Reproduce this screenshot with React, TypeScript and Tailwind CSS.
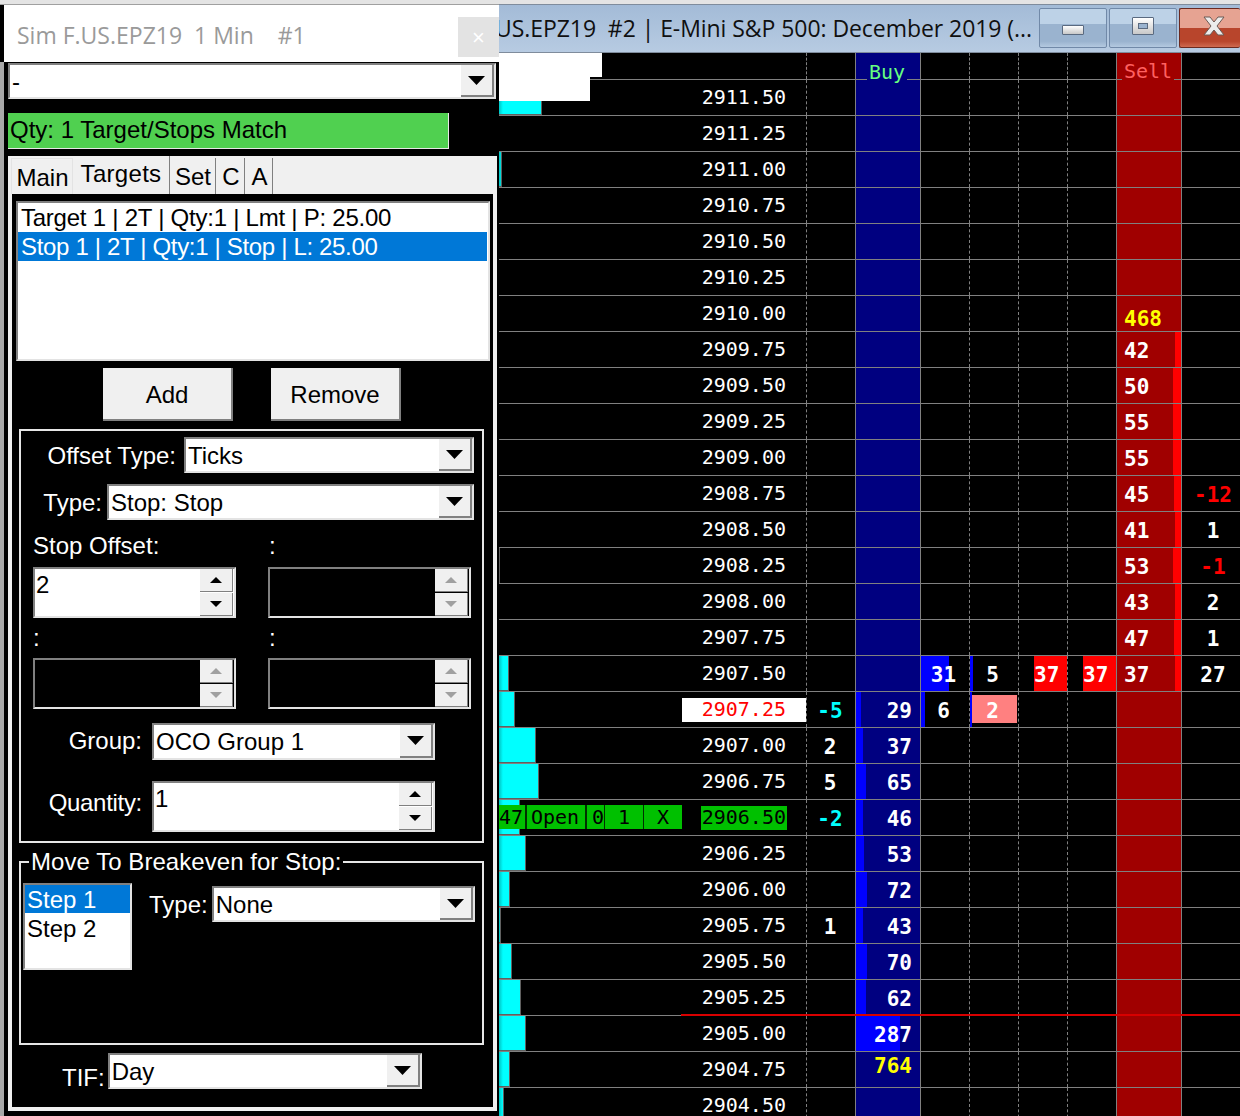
import type { ReactNode } from 'react';

const SANS = 'font-["Liberation_Sans",Arial,sans-serif]';
const GRID = 'grid grid-cols-[307px_49px_65px_49px_49px_49px_49px_65px_59px]';

type Row = {
  price: string;
  bar?: number;
  priceStyle?: 'last' | 'order';
  delta?: string;
  deltaCyan?: boolean;
  buy?: string;
  buyBar?: number;
  buyYellow?: boolean;
  sell?: string;
  sellBar?: number;
  sellYellow?: boolean;
  right?: string;
  rightRed?: boolean;
  kind?: 'trades' | 'trades2' | 'order' | 'line';
};

const rows: Row[] = [
  { price: '2911.50', bar: 43 },
  { price: '2911.25' },
  { price: '2911.00', bar: 3 },
  { price: '2910.75' },
  { price: '2910.50' },
  { price: '2910.25' },
  { price: '2910.00', sell: '468', sellYellow: true },
  { price: '2909.75', sell: '42', sellBar: 6 },
  { price: '2909.50', sell: '50', sellBar: 8 },
  { price: '2909.25', sell: '55', sellBar: 8 },
  { price: '2909.00', sell: '55', sellBar: 8 },
  { price: '2908.75', sell: '45', sellBar: 7, right: '-12', rightRed: true },
  { price: '2908.50', sell: '41', sellBar: 6, right: '1' },
  { price: '2908.25', bar: 1, sell: '53', sellBar: 8, right: '-1', rightRed: true },
  { price: '2908.00', sell: '43', sellBar: 6, right: '2' },
  { price: '2907.75', sell: '47', sellBar: 7, right: '1' },
  { price: '2907.50', bar: 10, sell: '37', sellBar: 6, right: '27', kind: 'trades' },
  { price: '2907.25', bar: 16, priceStyle: 'last', delta: '-5', deltaCyan: true, buy: '29', buyBar: 5, kind: 'trades2' },
  { price: '2907.00', bar: 37, delta: '2', buy: '37', buyBar: 7 },
  { price: '2906.75', bar: 40, delta: '5', buy: '65', buyBar: 10 },
  { price: '2906.50', bar: 21, priceStyle: 'order', delta: '-2', deltaCyan: true, buy: '46', buyBar: 7, kind: 'order' },
  { price: '2906.25', bar: 27, buy: '53', buyBar: 8 },
  { price: '2906.00', bar: 11, buy: '72', buyBar: 11 },
  { price: '2905.75', bar: 2, delta: '1', buy: '43', buyBar: 7 },
  { price: '2905.50', bar: 13, buy: '70', buyBar: 11 },
  { price: '2905.25', bar: 22, buy: '62', buyBar: 10, kind: 'line' },
  { price: '2905.00', bar: 27, buy: '287', buyBar: 44 },
  { price: '2904.75', bar: 11, buy: '764', buyYellow: true },
  { price: '2904.50', bar: 5 },
];

function Arrow({ up, disabled, small }: { up?: boolean; disabled?: boolean; small?: boolean }) {
  return (
    <svg width={small ? 12 : 17} height={small ? 6 : 9} viewBox="0 0 12 6" preserveAspectRatio="none" className={disabled ? 'text-[#a0a0a0]' : 'text-black'}>
      <path d={up ? 'M0 6 L6 0 L12 6 Z' : 'M0 0 L12 0 L6 6 Z'} fill="currentColor" />
    </svg>
  );
}

function Combo({ text, className }: { text: string; className: string }) {
  return (
    <div className={`flex bg-white border-2 border-t-[#808080] border-l-[#808080] border-r-[#e3e3e3] border-b-[#e3e3e3] text-black text-[24px] ${className}`}>
      <span className="flex-1 pl-[2px] leading-[34px]">{text}</span>
      <span className="w-[33px] flex items-center justify-center bg-[#f0f0f0] border-r-2 border-b-2 border-[#808080]">
        <Arrow />
      </span>
    </div>
  );
}

function SpinButton({ up, disabled }: { up?: boolean; disabled?: boolean }) {
  return (
    <span className="h-[23px] flex items-center justify-center bg-[#f0f0f0] border-r border-b border-[#808080]">
      <Arrow up={up} disabled={disabled} small />
    </span>
  );
}

function Spin({ text, disabled, className }: { text?: string; disabled?: boolean; className: string }) {
  return (
    <div className={`flex h-[51px] border-2 border-t-[#808080] border-l-[#808080] border-r-[#e3e3e3] border-b-[#e3e3e3] ${disabled ? 'bg-black' : 'bg-white'} ${className}`}>
      <span className="flex-1 pl-[1px] text-black text-[24px] leading-[32px]">{text}</span>
      <span className="w-[33px] flex flex-col gap-[1px] mr-[1px]">
        <SpinButton up disabled={disabled} />
        <SpinButton disabled={disabled} />
      </span>
    </div>
  );
}

function Tab({ children, className }: { children: ReactNode; className: string }) {
  return <div className={`flex justify-center bg-[#f0f0f0] border-r border-[#808080] ${className}`}>{children}</div>;
}

function LeftPanel() {
  return (
    <div className={`w-[499px] shrink-0 flex flex-col ${SANS}`}>
      <div className="h-[5px] bg-[#e4e4e4] border-b border-[#a0a0a0]" />
      <div className="h-[57px] ml-[4px] bg-white flex items-start relative">
        <span className="ml-[13px] mt-[10px] text-[23px] leading-[40px] text-[#9a9a9a] font-['Open_Sans',sans-serif] whitespace-pre">
          Sim F.US.EPZ19  1 Min    #1
        </span>
        <span className="absolute right-0 top-[12px] w-[41px] h-[40px] bg-[#e3e3e3] flex items-center justify-center text-white text-[22px]">×</span>
      </div>
      <div className="flex-1 bg-black border-l-[4px] border-[#a9a9a9] flex flex-col">
        <Combo text="-" className="ml-[4px] w-[488px] h-[36px] mt-[1px]" />
        <div className="ml-[4px] mt-[14px] w-[441px] h-[36px] bg-[#50d050] border-b border-r border-[#e8e8e8] text-black text-[24px] leading-[34px] pl-[2px]">
          Qty: 1 Target/Stops Match
        </div>
        <div className="ml-[4px] mt-[7px] w-[489px] h-[955px] bg-[#f0f0f0] flex flex-col">
          <div className="h-[38px] flex items-end pl-[3px] text-[24px] text-black">
            <Tab className="w-[62px] h-[36px] leading-[38px] pl-[1px] border-t border-l border-[#e3e3e3]">Main</Tab>
            <Tab className="w-[97px] h-[38px] leading-[36px] tracking-[0.3px]">Targets</Tab>
            <Tab className="w-[46px] h-[36px] leading-[38px] pl-[1px]">Set</Tab>
            <Tab className="w-[28px] h-[36px] ml-[1px] leading-[38px] pl-[1px]">C</Tab>
            <Tab className="w-[27px] h-[36px] ml-[1px] leading-[38px] pl-[1px]">A</Tab>
          </div>
          <div className="flex-1 mx-[4px] mb-[4px] bg-black text-white text-[24px] flex flex-col">
            <div className="ml-[4px] mt-[7px] w-[474px] h-[160px] bg-white border-2 border-t-[#808080] border-l-[#808080] border-r-[#e3e3e3] border-b-[#e3e3e3] text-black">
              <div className="h-[29px] pl-[3px] leading-[30px] tracking-[-0.24px]">Target 1 | 2T | Qty:1 | Lmt | P: 25.00</div>
              <div className="h-[29px] pl-[3px] mr-[1px] leading-[30px] tracking-[-0.33px] bg-[#0078d7] text-white">Stop 1 | 2T | Qty:1 | Stop | L: 25.00</div>
            </div>
            <div className="flex gap-[38px] ml-[91px] mt-[7px] text-black">
              <button className="w-[130px] h-[53px] pt-[2px] bg-[#f0f0f0] border-r-2 border-b-2 border-[#808080]">Add</button>
              <button className="w-[130px] h-[53px] pt-[2px] bg-[#f0f0f0] border-r-2 border-b-2 border-[#808080]">Remove</button>
            </div>

            <div className="ml-[7px] mt-[8px] w-[465px] h-[414px] border-2 border-[#e6e6e6]">
              <div className="flex items-center justify-end gap-[8px] mt-[6px] pr-[8px]">
                <span className="translate-y-[1px]">Offset Type:</span>
                <Combo text="Ticks" className="w-[290px] h-[36px]" />
              </div>
              <div className="flex items-center justify-end gap-[5px] mt-[11px] pr-[8px]">
                <span className="translate-y-[1px]">Type:</span>
                <Combo text="Stop: Stop" className="w-[367px] h-[36px]" />
              </div>
              <div className="grid grid-cols-[203px_203px] gap-x-[32px] ml-[12px]">
                <div className="h-[47px] leading-[52px]">Stop Offset:</div>
                <div className="h-[47px] leading-[52px] pl-[1px]">:</div>
                <Spin text="2" className="w-[203px]" />
                <Spin disabled className="w-[203px]" />
                <div className="h-[40px] leading-[40px]">:</div>
                <div className="h-[40px] leading-[40px] pl-[1px]">:</div>
                <Spin disabled className="w-[203px]" />
                <Spin disabled className="w-[203px]" />
              </div>
              <div className="flex items-center justify-end gap-[10px] mt-[14px] pr-[47px]">
                <span className="-translate-y-[1px]">Group:</span>
                <Combo text="OCO Group 1" className="w-[283px] h-[37px]" />
              </div>
              <div className="flex items-center justify-end gap-[10px] mt-[21px] pr-[47px]">
                <span className="-translate-y-[4px] tracking-[-0.3px]">Quantity:</span>
                <Spin text="1" className="w-[283px]" />
              </div>
            </div>

            <div className="relative ml-[7px] mt-[18px] w-[465px] h-[184px] border-2 border-[#e6e6e6]">
              <span className="absolute left-[8px] top-[-15px] px-[2px] bg-black leading-[28px] tracking-[0.05px] whitespace-nowrap">Move To Breakeven for Stop:</span>
              <div className="flex items-start">
                <div className="ml-[2px] mt-[20px] w-[109px] h-[87px] bg-white border-2 border-t-[#808080] border-l-[#808080] border-r-[#e3e3e3] border-b-[#e3e3e3] text-black">
                  <div className="h-[28px] pl-[2px] leading-[30px] bg-[#0078d7] text-white">Step 1</div>
                  <div className="h-[29px] pl-[2px] leading-[31px]">Step 2</div>
                </div>
                <div className="flex items-center gap-[4px] ml-[17px] mt-[23px]">
                  <span className="translate-y-[1px]">Type:</span>
                  <Combo text="None" className="w-[263px] h-[36px]" />
                </div>
              </div>
            </div>

            <div className="flex items-start mt-[8px] ml-[50px]">
              <span className="mt-[10px] mr-[3px] leading-[30px]">TIF:</span>
              <Combo text="Day" className="w-[314px] h-[36px]" />
            </div>
          </div>
        </div>
      </div>
    </div>
  );
}

function WinButton({ className, children }: { className: string; children: ReactNode }) {
  return <div className={`h-[40px] flex items-center justify-center rounded-[2px] border ${className}`}>{children}</div>;
}

function TitleBar() {
  return (
    <div className="h-[53px] shrink-0 flex flex-col">
      <div className="h-[4px] bg-[#e4e4e4]" />
      <div className="flex-1 flex bg-linear-to-b from-[#a3bbd7] to-[#b7cbe2] border-t border-b border-[#7f8c9c] overflow-hidden">
        <span className="flex-1 -ml-[4px] text-[23px] leading-[46px] tracking-[-0.06px] text-[#101010] font-['Open_Sans',sans-serif] whitespace-pre overflow-hidden">
          US.EPZ19  #2 | E-Mini S&P 500: December 2019 (...
        </span>
        <div className="flex gap-[2px] pt-[3px]">
          <WinButton className="w-[68px] border-[#7189a8] bg-[linear-gradient(#bdd2e7_0_40%,#9ab3cf_40%_85%,#b4c9e0_100%)]">
            <span className="block w-[22px] h-[10px] mt-[4px] rounded-[1px] border border-[#5a6a80] bg-linear-to-b from-white to-[#c8c8c8]" />
          </WinButton>
          <WinButton className="w-[68px] border-[#7189a8] bg-[linear-gradient(#bdd2e7_0_40%,#9ab3cf_40%_85%,#b4c9e0_100%)]">
            <span className="flex items-center justify-center w-[22px] h-[18px] -mt-[4px] rounded-[1px] border border-[#5a6a80] bg-linear-to-b from-white to-[#c8c8c8]">
              <span className="block w-[10px] h-[6px] bg-[#9ab3cf] border border-[#5a6a80]" />
            </span>
          </WinButton>
          <WinButton className="w-[61px] border-[#6b2a20] border-r-0 bg-[linear-gradient(#e6a392_0_50%,#b8452c_50%_85%,#cf6a50_100%)]">
            <svg width="24" height="20" viewBox="0 0 24 20" className="-mt-[4px] ml-[7px]">
              <path d="M2 1 H8 L12 6 L16 1 H22 L15 10 L22 19 H16 L12 14 L8 19 H2 L9 10 Z" fill="#ececec" stroke="#6b5a55" strokeWidth="1" />
            </svg>
          </WinButton>
        </div>
      </div>
    </div>
  );
}

function Num({ children, className = '' }: { children: ReactNode; className?: string }) {
  return <span className={`relative top-[2px] font-bold text-[21px] ${className}`}>{children}</span>;
}

function OrderBar() {
  return (
    <div className="absolute left-0 top-[5px] w-[183px] h-[24px] bg-[#00c000] text-black text-[20px] leading-[24px] flex overflow-hidden">
      <span className="w-[26px] shrink-0 whitespace-nowrap">47</span>
      <span className="w-[60px] shrink-0 border-l-2 border-[#003000] pl-[4px]">Open</span>
      <span className="w-[19px] shrink-0 border-l-2 border-[#003000] pl-[5px]">0</span>
      <span className="w-[39px] shrink-0 border-l border-[#003000] text-center">1</span>
      <span className="w-[39px] shrink-0 border-l border-[#003000] text-center">X</span>
    </div>
  );
}

function LadderRow({ row }: { row: Row }) {
  const dashed = 'border-l border-dashed border-[#808080]';
  const solid = 'border-l border-[#808080]';
  return (
    <div className={`${GRID} h-[36px] border-b border-[#808080] relative`}>
      <div className="relative flex items-center justify-end">
        {row.bar ? (
          <div
            className="absolute left-0 top-0 bottom-0 bg-linear-to-r from-[#00c4c4] to-[#00ffff] to-[4px] border-r border-b border-[#606060]"
            style={{ width: row.bar }}
          />
        ) : null}
        {row.kind === 'order' && <OrderBar />}
        {row.priceStyle === 'last' ? (
          <span className="relative w-[124px] h-[24px] bg-white text-[#ff0000] text-right pr-[20px] leading-[22px]">{row.price}</span>
        ) : row.priceStyle === 'order' ? (
          <span className="relative h-[24px] bg-[#00c000] text-black mr-[19px] px-[1px] leading-[22px]">{row.price}</span>
        ) : (
          <span className="relative -top-[1px] mr-[20px]">{row.price}</span>
        )}
      </div>
      <div className={`${dashed} flex items-center justify-center pr-[2px]`}>
        {row.delta && <Num className={row.deltaCyan ? 'text-[#00ffff]' : 'text-white'}>{row.delta}</Num>}
      </div>
      <div className={`${solid} relative flex items-center justify-end pr-[8px] bg-[#000080]`}>
        {row.buyBar ? <div className="absolute left-0 top-0 bottom-0 bg-[#0000ff]" style={{ width: row.buyBar }} /> : null}
        {row.buy && <Num className={row.buyYellow ? 'text-[#ffff00] -translate-y-[5px]' : 'text-white'}>{row.buy}</Num>}
      </div>
      <div className={`${solid} relative flex items-center justify-center pr-[3px]`}>
        {row.kind === 'trades' && (
          <>
            <div className="absolute left-0 top-0 bottom-0 w-[28px] bg-[#0000ff]" />
            <Num className="text-white">31</Num>
          </>
        )}
        {row.kind === 'trades2' && (
          <>
            <div className="absolute left-0 top-0 bottom-0 w-[4px] bg-[#0000ff]" />
            <Num className="text-white">6</Num>
          </>
        )}
      </div>
      <div className={`${dashed} relative flex items-center justify-center pr-[3px]`}>
        {row.kind === 'trades' && (
          <>
            <div className="absolute left-0 top-0 bottom-0 w-[3px] bg-[#0000ff]" />
            <Num className="text-white">5</Num>
          </>
        )}
        {row.kind === 'trades2' && (
          <>
            <div className="absolute left-0 top-[3px] w-[47px] h-[28px] bg-[#ff8080]" />
            <div className="absolute left-0 top-0 bottom-0 w-[2px] bg-[#0000ff]" />
            <Num className="text-white">2</Num>
          </>
        )}
      </div>
      <div className={`${dashed} relative flex items-center`}>
        {row.kind === 'trades' && (
          <div className="ml-[15px] w-[33px] h-full bg-[#ff0000] text-left">
            <Num className="text-white leading-[35px]">37</Num>
          </div>
        )}
      </div>
      <div className={`${dashed} relative flex items-center`}>
        {row.kind === 'trades' && (
          <div className="ml-[15px] w-[33px] h-full bg-[#ff0000] text-left">
            <Num className="text-white leading-[35px]">37</Num>
          </div>
        )}
      </div>
      <div className={`${solid} relative flex items-center pl-[7px] bg-[#a00000]`}>
        {row.sellBar ? <div className="absolute right-0 top-0 bottom-0 bg-[#ff0000]" style={{ width: row.sellBar }} /> : null}
        {row.sell && <Num className={row.sellYellow ? 'text-[#ffff00] translate-y-[4px]' : 'text-white'}>{row.sell}</Num>}
      </div>
      <div className={`${solid} flex items-center justify-center pl-[4px]`}>
        {row.right && <Num className={row.rightRed ? 'text-[#ff0000]' : 'text-white'}>{row.right}</Num>}
      </div>
      {row.kind === 'line' && <div className="absolute left-[182px] right-0 -bottom-[1px] h-[2px] bg-[#d80000]" />}
    </div>
  );
}

function Ladder() {
  const dashed = 'border-l border-dashed border-[#808080]';
  const solid = 'border-l border-[#808080]';
  return (
    <div className="relative flex-1 font-['DejaVu_Sans_Mono',monospace] text-[20px] text-white overflow-hidden">
      <div className={`${GRID} relative z-10 h-[27px] border-b border-[#808080]`}>
        <div />
        <div className={dashed} />
        <div className={`${solid} bg-[#000080] flex justify-center pr-[2px]`}>
          <span className="self-end h-[26px] px-[2px] translate-y-[7px] bg-[#000080] leading-[24px] text-[#66ff80]">Buy</span>
        </div>
        <div className={solid} />
        <div className={dashed} />
        <div className={dashed} />
        <div className={dashed} />
        <div className={`${solid} bg-[#a00000] flex justify-center pr-[2px]`}>
          <span className="self-end h-[26px] px-[2px] translate-y-[6px] bg-[#a00000] leading-[24px] text-[#ff6060]">Sell</span>
        </div>
        <div className={solid} />
      </div>
      {rows.map((row) => (
        <LadderRow key={row.price} row={row} />
      ))}
      {/* leftover paint from the window behind */}
      <div className="absolute z-20 left-0 top-0 w-[103px] h-[24px] bg-white" />
      <div className="absolute z-20 left-0 top-[24px] w-[91px] h-[24px] bg-white" />
    </div>
  );
}

export default function App() {
  return (
    <div className="w-[1240px] h-[1116px] flex bg-black overflow-hidden">
      <LeftPanel />
      <div className="flex-1 flex flex-col min-w-0">
        <TitleBar />
        <Ladder />
      </div>
    </div>
  );
}
